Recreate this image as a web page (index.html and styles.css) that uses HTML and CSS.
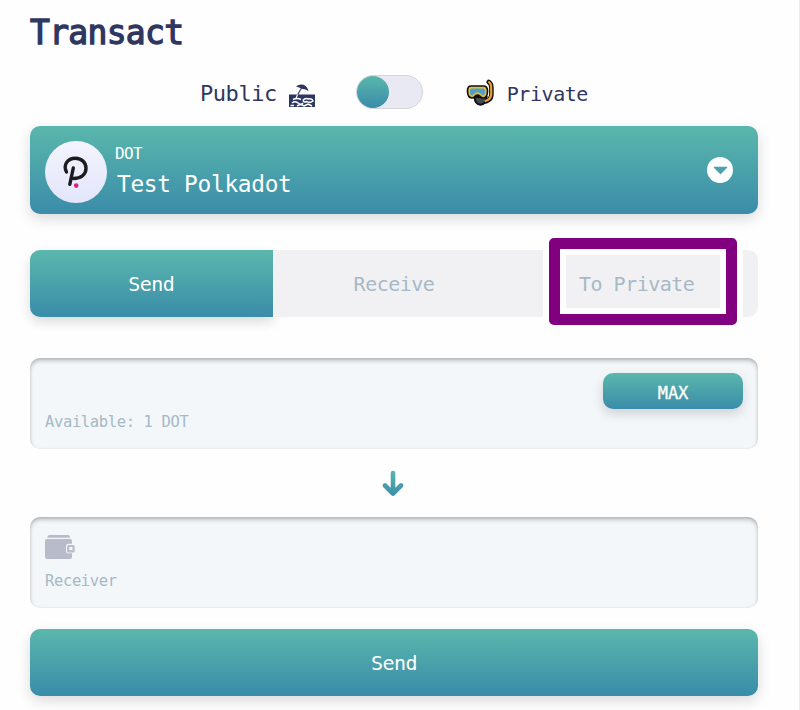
FILE: index.html
```
<!DOCTYPE html>
<html lang="en">
<head>
    <meta charset="UTF-8">
    <meta name="viewport" content="width=device-width, initial-scale=1.0">
    <title>Transact</title>
    <link rel="stylesheet" href="styles.css">
</head>
<body>
    <div class="main">
        <h1>Transact</h1>

        <div class="mode-row">
            <span class="mode-label">Public</span>
            <svg class="beach-icon" width="28" height="28" viewBox="0 0 28 28">
                <path d="M8 3.5 Q11 1 15.5 1.8 Q19.5 3.5 20.5 8 Q17 5.8 14.5 6 Q11 4 8 3.5 Z" fill="#2d3561"/>
                <path d="M13.5 5 L9.5 12" stroke="#2d3561" stroke-width="1.1"/>
                <rect x="1" y="11.5" width="26" height="12.5" fill="#2d3561"/>
                <path d="M9.5 11.5 L8 15.5" stroke="#fff" stroke-width="1.1"/>
                <path d="M5 16.5 Q9 14.5 13 16.5 M4 20 Q7 17.5 10 20 T15 20 M15 17.5 Q17 14.5 20.5 16 Q24 15 25 18 Q22 20.5 19 18.5 Q16 20 15 17.5 M2.5 22.5 H6 M9 23 Q13 20.5 16 23 L20 21 L24 23" stroke="#fff" stroke-width="1.5" fill="none"/>
            </svg>
            <div class="switch"><div class="knob"></div></div>
            <svg class="mask-icon" width="28" height="28" viewBox="0 0 28 28">
                <path d="M22.8 3 Q25.7 5 25.4 10 V16 Q24.9 22 17 23" fill="none" stroke="#111" stroke-width="4.6" stroke-linecap="round"/>
                <path d="M8.5 18 Q9 25.5 14.5 25.8 Q20 25.5 20.5 18 Z" fill="#3f4a52" stroke="#111" stroke-width="2"/>
                <path d="M23 3.2 Q25.5 5 25.2 10 V16 Q24.3 20.5 19.5 22" fill="none" stroke="#e9a32d" stroke-width="2.2" stroke-linecap="round"/>
                <path d="M5 7 H17.5 Q21.5 7 21.5 12 Q21.5 19 17.3 19 Q15 19 13.9 17.2 Q11.5 15 9.1 17.2 Q8 19 6 19 Q1.5 18.5 1.5 12 Q1.5 7 5 7 Z" fill="#e8bf35" stroke="#111" stroke-width="1.7"/>
                <path d="M6 9.5 H17 Q19.2 9.5 19 13 Q18.6 16.8 16.5 16.3 Q14 13.3 11.5 13.3 Q9 13.3 6.8 16.3 Q4.2 16.8 4 13 Q3.8 9.5 6 9.5 Z" fill="#4f9fca"/>
            </svg>
            <span class="mode-label private">Private</span>
        </div>

        <div class="token-card">
            <div class="token-logo">
                <svg width="62" height="62" viewBox="0 0 62 62">
                    <path d="M21.5 31 C18 24.5 22 17.3 30.5 17.3 C37 17.3 41 22 41 27.3 C41 33.5 36 37.5 28.5 37.5 M28.3 27 L24.8 43.3" fill="none" stroke="#1c1c20" stroke-width="3.4" stroke-linecap="round"/>
                    <circle cx="31.2" cy="44.6" r="2.3" fill="#e6188a"/>
                </svg>
            </div>
            <div class="token-text">
                <span class="token-symbol">DOT</span>
                <span class="token-name">Test Polkadot</span>
            </div>
            <svg class="dropdown" width="26" height="26" viewBox="0 0 26 26">
                <circle cx="13" cy="13" r="13" fill="#fff"/>
                <path d="M7.3 10.4 H19.7 L13.5 16.6 Z" fill="#4aa3aa" stroke="#4aa3aa" stroke-width="1.2" stroke-linejoin="round"/>
            </svg>
        </div>

        <div class="tabs">
            <div class="tab active">Send</div>
            <div class="tab receive">Receive</div>
            <div class="tab">To Private<div class="highlight"></div></div>
        </div>

        <div class="field">
            <button class="max-btn">MAX</button>
            <span class="hint">Available: 1 DOT</span>
        </div>

        <div class="arrow">
            <svg width="22" height="27" viewBox="0 0 22 27">
                <defs>
                    <linearGradient id="teal" gradientUnits="userSpaceOnUse" x1="0" y1="0" x2="0" y2="27">
                        <stop offset="0" stop-color="#5ab7ac"/>
                        <stop offset="1" stop-color="#3a8ca9"/>
                    </linearGradient>
                </defs>
                <path d="M11 3 V23 M3 15.5 L11 23.5 L19 15.5" fill="none" stroke="url(#teal)" stroke-width="4.6" stroke-linecap="round" stroke-linejoin="round"/>
            </svg>
        </div>

        <div class="field">
            <svg class="wallet" width="30" height="25" viewBox="0 0 30 25">
                <path d="M4 0 H23 Q25 0 25 2.8 H2.3 Q2.5 0 4 0 Z" fill="#b8bbc9"/>
                <path d="M2 4 H25 Q27 4 27 6 V8.8 H23 Q21 9 21 11 V16 Q21 18.3 23 18.3 H27 V22 Q27 24 25 24 H2 Q0 24 0 22 V6 Q0 4 2 4 Z" fill="#b8bbc9"/>
                <rect x="23.2" y="11" width="5.4" height="5.4" fill="none" stroke="#b8bbc9" stroke-width="2.2" rx="0.5"/>
            </svg>
            <span class="hint">Receiver</span>
        </div>

        <button class="send-btn">Send</button>
    </div>
</body>
</html>
```
FILE: styles.css
```
* {
    box-sizing: border-box;
}
body {
    margin: 0;
    height: 710px;
    overflow: hidden;
    background-color: #fefefe;
    font-family: "DejaVu Sans Mono", monospace;
    color: #2f365f;
}
.main {
    width: 800px;
    height: 710px;
    padding: 12px 41px 0 30px;
    border-right: 1px solid #ececee;
    display: flex;
    flex-direction: column;
}
h1 {
    margin: 0;
    height: 42px;
    line-height: 42px;
    font-size: 33px;
    font-weight: normal;
    letter-spacing: -0.7px;
    -webkit-text-stroke: 1.3px #2f365f;
}
.mode-row {
    display: flex;
    align-items: center;
    height: 36px;
    margin-top: 20px;
    padding-left: 170px;
    font-size: 22px;
}
.mode-label {
    line-height: 36px;
    margin-top: 3px;
    letter-spacing: -0.45px;
}
.mode-label.private {
    margin-left: 13px;
    font-size: 20px;
}
.beach-icon {
    margin-left: 11px;
    margin-top: 9px;
}
.switch {
    width: 67px;
    height: 34px;
    margin-left: 40px;
    border: 1px solid #d5d5dd;
    border-radius: 17px;
    background-color: #e9e9f3;
}
.knob {
    width: 32px;
    height: 32px;
    border-radius: 50%;
    background: linear-gradient(#5ab7ac, #3a8ca9);
}
.mask-icon {
    margin-left: 43px;
    margin-top: 1px;
}

.token-card {
    display: flex;
    align-items: center;
    height: 88px;
    margin-top: 16px;
    padding: 0 25px 0 15px;
    border-radius: 10px;
    background: linear-gradient(#5ab7ac, #3a8ca9);
    box-shadow: 0 5px 14px rgba(0, 0, 0, 0.14);
    color: white;
}
.token-logo {
    width: 62px;
    height: 62px;
    margin-top: 4px;
    border-radius: 50%;
    background: linear-gradient(#f3f4fd, #e3e6fb);
}
.token-text {
    flex-grow: 1;
    display: flex;
    flex-direction: column;
    margin-left: 8px;
    margin-top: 4px;
}
.token-symbol {
    line-height: 24px;
    font-size: 16px;
    letter-spacing: -0.6px;
}
.token-name {
    line-height: 36px;
    padding-left: 2px;
    font-size: 22.8px;
    letter-spacing: -0.3px;
}

.tabs {
    display: flex;
    height: 67px;
    margin-top: 36px;
    border-radius: 10px;
    background-color: #f1f1f4;
}
.tab {
    position: relative;
    flex: 1;
    line-height: 68px;
    text-align: center;
    font-size: 20px;
    letter-spacing: -0.5px;
    color: #a6b9c6;
}
.tab.active {
    color: white;
    border-radius: 10px 0 0 10px;
    background: linear-gradient(#5ab7ac, #3a8ca9);
    box-shadow: 0 5px 12px rgba(0, 0, 0, 0.14);
}
.tab.receive {
    background-color: #f1f1f4;
}
.highlight {
    position: absolute;
    left: 34px;
    top: -12px;
    width: 188px;
    height: 87px;
    border: 11px solid #800080;
    border-radius: 5px;
    box-shadow: inset 0 0 0 6px #fefefe, 0 0 0 6px #fefefe;
}

.field {
    display: flex;
    flex-direction: column;
    height: 91px;
    margin-top: 41px;
    padding: 15px;
    border-radius: 10px;
    background-color: #f3f7fa;
    box-shadow: inset 0 3px 5px -1px rgba(0, 0, 0, 0.3), inset 0 0 3px rgba(0, 0, 0, 0.08);
}
.max-btn {
    align-self: flex-end;
    width: 140px;
    height: 36px;
    padding: 3px 0 0;
    border: none;
    border-radius: 10px;
    background: linear-gradient(#5ab7ac, #3a8ca9);
    box-shadow: 0 5px 12px rgba(0, 0, 0, 0.15);
    color: white;
    font-family: inherit;
    font-size: 17px;
    -webkit-text-stroke: 0.3px white;
}
.hint {
    height: 20px;
    line-height: 20px;
    font-size: 15.5px;
    letter-spacing: -0.37px;
    color: #a6b9c6;
}
.max-btn + .hint {
    margin-top: 3px;
}
.arrow {
    height: 27px;
    margin-top: 21px;
    padding-left: 352px;
}
.arrow + .field {
    margin-top: 20px;
}
.wallet {
    margin-top: 3px;
}
.wallet + .hint {
    margin-top: 11px;
}
.send-btn {
    height: 67px;
    margin-top: 21px;
    padding: 1px 0 0;
    border: none;
    border-radius: 10px;
    background: linear-gradient(#5ab7ac, #3a8ca9);
    box-shadow: 0 5px 14px rgba(0, 0, 0, 0.14);
    color: white;
    font-family: inherit;
    font-size: 20px;
    letter-spacing: -0.5px;
}
```
